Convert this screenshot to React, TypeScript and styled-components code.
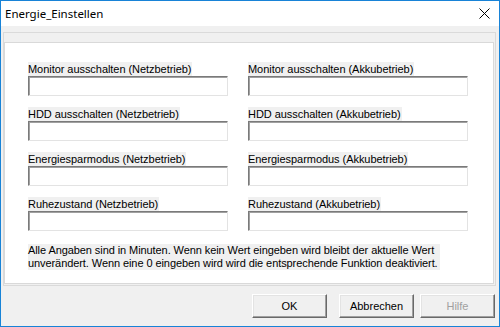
import React from 'react';
import styled, { createGlobalStyle } from 'styled-components';

const GlobalStyle = createGlobalStyle`
  html, body {
    margin: 0;
    padding: 0;
    background: #ffffff;
  }
  body {
    width: 500px;
    height: 327px;
    overflow: hidden;
  }
  * {
    box-sizing: border-box;
  }
`;

// Fenster mit blauem Rahmen
const Window = styled.div`
  width: 500px;
  height: 327px;
  border: 1px solid #1883d7;
  background: #f0f0f0;
  display: flex;
  flex-direction: column;
  font-family: 'Liberation Sans', Arial, sans-serif;
  font-size: 11px;
  color: #000000;
`;

const TitleBar = styled.div`
  height: 25px;
  background: #ffffff;
  display: flex;
  align-items: center;
  justify-content: space-between;
  padding: 0 9px 0 4px;
`;

const Title = styled.span`
  font-family: 'Noto Sans', 'Open Sans', sans-serif;
  font-size: 11.5px;
  color: #000000;
`;

const CloseButton = styled.svg`
  width: 11px;
  height: 11px;
  display: block;
`;

const Body = styled.div`
  flex: 1;
  display: flex;
  flex-direction: column;
  padding: 6px 3px 0 2px;
`;

// äußerer Rahmen um das weiße Panel
const Frame = styled.div`
  height: 254px;
  border: 1px solid #dadada;
  padding: 9px 1px 1px 0;
  display: flex;
`;

const Panel = styled.div`
  flex: 1;
  background: #ffffff;
  border: 1px solid #d9d9d9;
  padding: 19px 0 0 23px;
`;

const FieldGrid = styled.div`
  display: grid;
  grid-template-columns: 200px 220px;
  column-gap: 20px;
  row-gap: 11px;
`;

const Field = styled.div`
  display: flex;
  flex-direction: column;
  align-items: flex-start;
`;

const Label = styled.span`
  display: inline-block;
  background: #f0f0f0;
  height: 14px;
  line-height: 14px;
  padding: 0 1px 0 0;
  white-space: nowrap;
  letter-spacing: -0.05px;
`;

const TextInput = styled.input`
  width: 100%;
  height: 20px;
  margin: 0;
  padding: 0 2px;
  background: #ffffff;
  border-style: solid;
  border-width: 1px;
  border-color: #7a7a7a #e3e3e3 #e3e3e3 #7a7a7a;
  box-shadow: inset 1px 1px 0 #a0a0a0;
  font-family: inherit;
  font-size: 11px;
  outline: none;
`;

const Note = styled.p`
  display: inline-block;
  margin: 13px 0 0;
  padding-right: 2px;
  background: #f0f0f0;
  line-height: 13px;
  white-space: nowrap;
  letter-spacing: -0.08px;
`;

const ButtonRow = styled.div`
  display: flex;
  justify-content: flex-end;
  padding: 8px 1px 0 0;
`;

const Button = styled.button<{ $gap?: number; $disabled?: boolean }>`
  width: 75px;
  height: 24px;
  margin-left: ${(p) => p.$gap ?? 0}px;
  padding: 0;
  background: #f0f0f0;
  border-style: solid;
  border-width: 1px;
  border-color: #ffffff #696969 #696969 #ffffff;
  box-shadow: inset -1px -1px 0 #a0a0a0, inset 1px 1px 0 #e3e3e3;
  font-family: 'Liberation Sans', Arial, sans-serif;
  font-size: 11px;
  color: ${(p) => (p.$disabled ? '#a0a0a0' : '#000000')};
`;

const fields = [
  ['Monitor ausschalten (Netzbetrieb)', 'Monitor ausschalten (Akkubetrieb)'],
  ['HDD ausschalten (Netzbetrieb)', 'HDD ausschalten (Akkubetrieb)'],
  ['Energiesparmodus (Netzbetrieb)', 'Energiesparmodus (Akkubetrieb)'],
  ['Ruhezustand (Netzbetrieb)', 'Ruhezustand (Akkubetrieb)'],
];

export default function App() {
  return (
    <>
      <GlobalStyle />
      <Window>
        <TitleBar>
          <Title>Energie_Einstellen</Title>
          <CloseButton viewBox="0 0 11 11">
            <path d="M0.5 0.5 L10.5 10.5 M10.5 0.5 L0.5 10.5" stroke="#000" strokeWidth="1" fill="none" />
          </CloseButton>
        </TitleBar>
        <Body>
          <Frame>
            <Panel>
              <FieldGrid>
                {fields.flat().map((label) => (
                  <Field key={label}>
                    <Label>{label}</Label>
                    <TextInput type="text" />
                  </Field>
                ))}
              </FieldGrid>
              <Note>
                Alle Angaben sind in Minuten. Wenn kein Wert eingeben wird bleibt der aktuelle Wert
                <br />
                unverändert. Wenn eine 0 eingeben wird wird die entsprechende Funktion deaktiviert.
              </Note>
            </Panel>
          </Frame>
          <ButtonRow>
            <Button>OK</Button>
            <Button $gap={12}>Abbrechen</Button>
            <Button $gap={6} $disabled disabled>
              Hilfe
            </Button>
          </ButtonRow>
        </Body>
      </Window>
    </>
  );
}
